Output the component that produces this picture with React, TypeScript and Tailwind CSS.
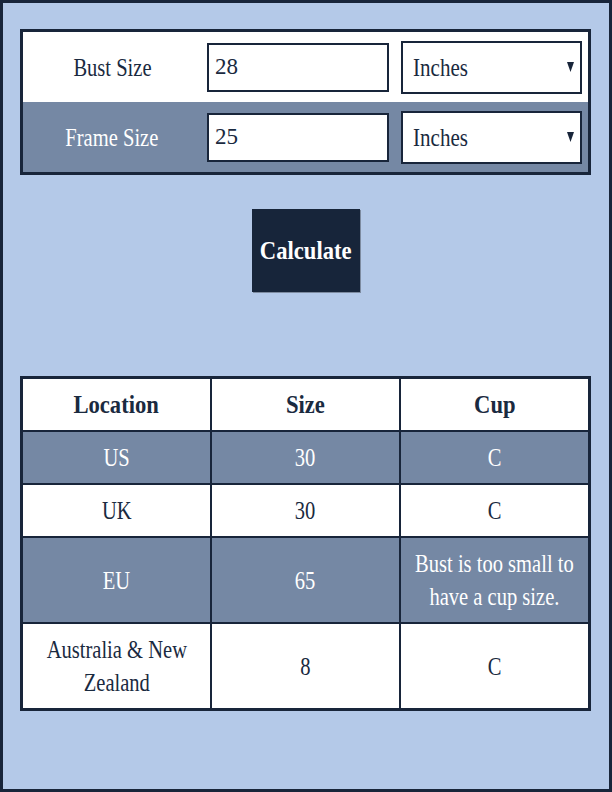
import { useState } from 'react';

type Row = {
    location: string[];
    size: string;
    cup: string[];
    shaded?: boolean;
};

const results: Row[] = [
    { location: ['US'], size: '30', cup: ['C'], shaded: true },
    { location: ['UK'], size: '30', cup: ['C'] },
    { location: ['EU'], size: '65', cup: ['Bust is too small to', 'have a cup size.'], shaded: true },
    { location: ['Australia & New', 'Zealand'], size: '8', cup: ['C'] },
];

// Narrow serif text, centred in its box
function Narrow({ lines, bold = false }: { lines: string[]; bold?: boolean }) {
    return (
        <div className="flex justify-center">
            <span
                className={`whitespace-nowrap text-center ${bold ? 'font-bold scale-x-[0.87]' : 'scale-x-[0.79]'}`}
            >
                {lines.map((line, i) => (
                    <span key={i}>
                        {i > 0 && <br />}
                        {line}
                    </span>
                ))}
            </span>
        </div>
    );
}

function UnitSelect() {
    return (
        <div className="ml-[12px] w-[181px] h-[53px] border-2 border-[#18253a] bg-white flex items-center justify-between pl-[10px] pr-[6px] text-[#1a2a40]">
            <span className="origin-left scale-x-[0.81] text-[26px]">Inches</span>
            <svg width="7" height="10" viewBox="0 0 7 10">
                <polygon points="0,0 7,0 3.5,10" fill="#18253a" />
            </svg>
        </div>
    );
}

function FormRow({ label, value, onChange, shaded }: { label: string; value: string; onChange: (v: string) => void; shaded?: boolean }) {
    return (
        <div className={`flex items-center h-[70px] ${shaded ? 'bg-[#7588a4] text-white' : 'bg-white text-[#1a2a40]'}`}>
            <div className="w-[178px] text-[26px]">
                <Narrow lines={[label]} />
            </div>
            <input
                value={value}
                onChange={(e) => onChange(e.target.value)}
                className="ml-[6px] w-[182px] h-[49px] border-2 border-[#18253a] bg-white pl-[6px] text-[23px] text-[#1a2a40] outline-none font-['Liberation_Serif',serif]"
            />
            <UnitSelect />
        </div>
    );
}

export default function App() {
    const [bust, setBust] = useState('28');
    const [frame, setFrame] = useState('25');

    return (
        <div className="h-[792px] border-[3px] border-[#18253a] bg-[#b4c9e8] px-[17px] pt-[26px] font-['Liberation_Serif',serif]">
            <div className="w-[571px] border-[3px] border-[#18253a]">
                <FormRow label="Bust Size" value={bust} onChange={setBust} />
                <FormRow label="Frame Size" value={frame} onChange={setFrame} shaded />
            </div>

            <div className="w-[571px] flex justify-center mt-[34px]">
                <button className="w-[108px] h-[83px] bg-[#17253a] text-white text-[26px] shadow-[1px_1px_0_#7d8ba0]">
                    <Narrow lines={['Calculate']} bold />
                </button>
            </div>

            <table className="mt-[84px] w-[571px] table-fixed border-collapse border-[3px] border-[#18253a] text-[26px] leading-[33px]">
                <thead>
                    <tr className="bg-white text-[#1a2a40]">
                        {['Location', 'Size', 'Cup'].map((h) => (
                            <th key={h} className="border-2 border-[#18253a] py-[9px] font-normal">
                                <Narrow lines={[h]} bold />
                            </th>
                        ))}
                    </tr>
                </thead>
                <tbody>
                    {results.map((row) => (
                        <tr
                            key={row.location.join(' ')}
                            className={row.shaded ? 'bg-[#7588a4] text-white' : 'bg-white text-[#1a2a40]'}
                        >
                            <td className="border-2 border-[#18253a] py-[9px]">
                                <Narrow lines={row.location} />
                            </td>
                            <td className="border-2 border-[#18253a] py-[9px]">
                                <Narrow lines={[row.size]} />
                            </td>
                            <td className="border-2 border-[#18253a] py-[9px]">
                                <Narrow lines={row.cup} />
                            </td>
                        </tr>
                    ))}
                </tbody>
            </table>
        </div>
    );
}
